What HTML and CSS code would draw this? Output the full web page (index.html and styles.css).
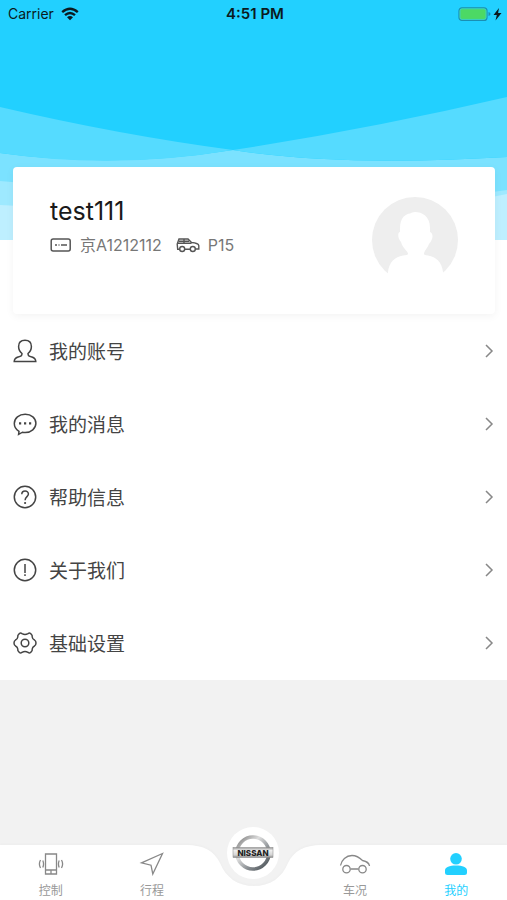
FILE: index.html
```html
<!DOCTYPE html>
<html lang="zh-CN">
<head>
    <meta charset="UTF-8">
    <meta name="viewport" content="width=device-width, initial-scale=1">
    <title>我的</title>
    <link rel="stylesheet" href="styles.css">
</head>
<body>
<header class="top">
    <svg class="waves" viewBox="0 0 507 240" preserveAspectRatio="none" aria-hidden="true">
        <rect width="507" height="240" fill="#22d0ff"/>
        <path d="M0 153Q115 169 233 150Q340 167 507 157V240H0z" fill="#7be2ff"/>
        <path d="M0 107Q120 135 233 150Q115 170 0 153z" fill="#55dbff"/>
        <path d="M507 97Q370 129 233 150Q340 167 507 157z" fill="#55dbff"/>
        <path d="M0 181Q120 190 253 220Q400 205 507 190V240H0z" fill="#9ee9ff"/>
        <path d="M0 205Q120 210 253 235Q440 208 507 194V240H0z" fill="#beefff"/>
    </svg>
    <div class="status">
        <div class="carrier">
            <span>Carrier</span>
            <svg width="18" height="14" viewBox="0 0 18 14" fill="none" stroke="#0b1a20" stroke-width="2.4">
                <path d="M1.2 5.2Q9-1.6 16.8 5.2M4 8.2Q9 3.8 14 8.2"/>
                <path d="M6 10.3Q9 7.8 12 10.3L9 13.2z" fill="#0b1a20" stroke="none"/>
            </svg>
        </div>
        <div class="time">4:51 PM</div>
        <div class="battery">
            <svg width="44" height="14" viewBox="0 0 44 14">
                <rect x="1" y=".8" width="28" height="12.6" rx="3" fill="#4cd964" stroke="#1a8fb4" stroke-width="1.2"/>
                <rect x="2" y="1.8" width="26" height="10.6" rx="2" fill="none" stroke="#36d3d8" stroke-width=".8"/>
                <path d="M30.5 5q2 .5 2 2t-2 2z" fill="#1a8fb4"/>
                <path d="M41 1L35.500 8h3.300l-1.300 5.500L43.500 6h-3.400z" fill="#0b1a20"/>
            </svg>
        </div>
    </div>
    <section class="card">
        <div class="user">
            <h1 class="name">test111</h1>
            <div class="info">
                <svg width="22" height="16" viewBox="0 0 22 16" fill="none" stroke="#555" stroke-width="1.5">
                    <rect x="1.2" y="2" width="19" height="12" rx="2"/>
                    <path d="M5 8h2M8.5 8h1M11 8h6"/>
                </svg>
                <span class="plate">京A1212112</span>
                <svg width="24" height="16" viewBox="0 0 24 16" fill="none" stroke="#555" stroke-width="1.4">
                    <path d="M3.800 12.300H1.700L1.200 7 3 2H12L15.500 5.500Q22.500 6 22.800 8.700V12H19.200M8.700 12.300H14.300"/>
                    <path d="M1.500 6.300H15.500M8 2V6.300M3 4.200H13"/>
                    <circle cx="6.200" cy="12" r="2.500"/>
                    <circle cx="16.800" cy="12" r="2.500"/>
                </svg>
                <span>P15</span>
            </div>
        </div>
        <svg class="avatar" width="86" height="86" viewBox="0 0 86 86" role="img" aria-label="头像">
            <circle cx="43" cy="43" r="43" fill="#eee"/>
            <path d="M43 15C50 15 58 19 58 31V35C61 36 62 41 57 47C55 52 52 54 52 57Q52 58 56 58.500C64 60 70 65 71 75V86H16V75C17 65 23 60 31 58.500Q36 58 36 57C36 54 31 52 29 45C25 40 26 35 28 35V31C28 20 34 17 38 16.500Q40 15 43 15z" fill="#fff"/>
        </svg>
    </section>
</header>

<nav class="menu">
    <a href="#account">
        <svg width="24" height="24" viewBox="0 0 24 24">
            <path d="M9 14.500C6.500 12.500 5.600 10 5.600 7.500C5.600 3.500 8 1.200 12 1.200S18.400 3.500 18.400 7.500C18.400 10 17.500 12.500 15 14.500C15 17 16 17.200 19 18C22 19 22.700 20 22.800 22.500H1.200C1.300 20 2 19 5 18C8 17.200 9 17 9 14.500z"/>
        </svg>
        <span>我的账号</span>
        <svg class="arrow" width="10" height="14" viewBox="0 0 10 14"><path d="M2 1L8 7 2 13"/></svg>
    </a>
    <a href="#message">
        <svg width="24" height="24" viewBox="0 0 24 24">
            <path d="M6 19.400C3 17.500 1.300 14.700 1.300 11.500C1.300 6.200 6 2.200 12.200 2.200S22.900 6.200 22.900 11.300S18.200 20.500 12.200 20.500Q10.500 20.500 9.500 20.200L5.600 22.300z"/>
            <path class="dot" d="M6 10.300h2.200v2.200H6zM11 10.300h2.200v2.200H11zM16 10.300h2.200v2.200H16z"/>
        </svg>
        <span>我的消息</span>
        <svg class="arrow" width="10" height="14" viewBox="0 0 10 14"><path d="M2 1L8 7 2 13"/></svg>
    </a>
    <a href="#help">
        <svg width="24" height="24" viewBox="0 0 24 24">
            <circle cx="12" cy="12" r="10.700"/>
            <path d="M8.800 9.300C8.800 4.900 15.400 4.900 15.400 9.100C15.400 11.600 12.100 11.800 12.100 15.200"/>
            <circle class="dot" cx="12.100" cy="18" r="1.100"/>
        </svg>
        <span>帮助信息</span>
        <svg class="arrow" width="10" height="14" viewBox="0 0 10 14"><path d="M2 1L8 7 2 13"/></svg>
    </a>
    <a href="#about">
        <svg width="24" height="24" viewBox="0 0 24 24">
            <circle cx="12" cy="12" r="10.700"/>
            <path d="M12 6V15M12 16.300V18"/>
        </svg>
        <span>关于我们</span>
        <svg class="arrow" width="10" height="14" viewBox="0 0 10 14"><path d="M2 1L8 7 2 13"/></svg>
    </a>
    <a href="#setting">
        <svg width="24" height="24" viewBox="0 0 24 24">
            <path d="M6.500 2.500Q7.500 1.600 9 2.700Q12 4.500 15 2.700Q16.500 1.600 17.500 2.500L18.500 3.500Q19.500 4.500 19.200 6Q19.500 8.200 21.500 9Q23 10 23 12T21.500 15Q19.500 15.800 19.200 18Q19.500 19.500 18.500 20.500L17.500 21.500Q16.500 22.400 15 21.300Q12 19.500 9 21.300Q7.500 22.400 6.500 21.500L5.500 20.500Q4.500 19.500 4.800 18Q4.500 15.800 2.500 15Q1 14 1 12T2.500 9Q4.500 8.200 4.800 6Q4.500 4.500 5.500 3.500z"/>
            <circle cx="12" cy="12" r="3.800"/>
        </svg>
        <span>基础设置</span>
        <svg class="arrow" width="10" height="14" viewBox="0 0 10 14"><path d="M2 1L8 7 2 13"/></svg>
    </a>
</nav>

<nav class="tab">
    <div class="tab-bg">
        <i></i>
        <svg width="136" height="55" viewBox="0 0 136 55">
            <path d="M0 0C18 0 28 6 34 18C40 33 52 41 68 41S96 33 102 18C108 6 118 0 136 0V55H0z" fill="#fff"/>
        </svg>
        <i></i>
    </div>
    <a href="#control">
        <svg width="26" height="24" viewBox="0 0 26 24">
            <path d="M7.500 2H18.500V22H7.500zM7.500 18H18.500M13 18V22M4.800 8.500Q6.300 12 4.800 15.500M2.500 8Q.300 12 2.500 16M21.200 8.500Q19.700 12 21.200 15.500M23.500 8Q25.700 12 23.500 16"/>
        </svg>
        <span>控制</span>
    </a>
    <a href="#trip">
        <svg width="26" height="24" viewBox="0 0 26 24">
            <path d="M23.500 1.500L2.500 10.800 12 13.200 13.800 22z"/>
        </svg>
        <span>行程</span>
    </a>
    <a class="home" href="#home">
        <svg width="52" height="52" viewBox="0 0 52 52" role="img" aria-label="NISSAN">
            <defs>
                <linearGradient id="metal" x1="0" y1="0" x2="1" y2="1">
                    <stop offset="0" stop-color="#777"/>
                    <stop offset=".35" stop-color="#dedede"/>
                    <stop offset=".65" stop-color="#8b9094"/>
                    <stop offset="1" stop-color="#444b50"/>
                </linearGradient>
                <linearGradient id="plate" x1="0" y1="0" x2="0" y2="1">
                    <stop offset="0" stop-color="#999"/>
                    <stop offset=".3" stop-color="#eee"/>
                    <stop offset=".75" stop-color="#d4d4d4"/>
                    <stop offset="1" stop-color="#888"/>
                </linearGradient>
            </defs>
            <circle cx="26" cy="26" r="26" fill="#fff"/>
            <circle cx="26" cy="26" r="16" fill="none" stroke="url(#metal)" stroke-width="3.600"/>
            <rect x="6" y="20.500" width="40" height="10" fill="url(#plate)" stroke="#888" stroke-width=".5"/>
            <text class="logo-text" x="26" y="28.500" text-anchor="middle">NISSAN</text>
        </svg>
    </a>
    <a href="#car">
        <svg width="32" height="24" viewBox="0 0 32 24">
            <path d="M1.500 13.500C2.500 8 7 3.500 13 3.500C18 3.500 20.500 5.500 23.500 8.500C28 9.500 30 10.500 30.500 14M11.500 17H19.500"/>
            <circle cx="7.500" cy="17.200" r="3.700"/>
            <circle cx="23.500" cy="17.200" r="3.700"/>
        </svg>
        <span>车况</span>
    </a>
    <a class="active" href="#mine">
        <svg width="26" height="24" viewBox="0 0 26 24">
            <circle cx="13" cy="6.800" r="5.800"/>
            <path d="M2 22V18.500C2 15 6.500 13.500 13 13.500S24 15 24 18.500V20.500Q24 23 21.500 23H4.500Q2 23 2 21z"/>
        </svg>
        <span>我的</span>
    </a>
</nav>
</body>
</html>
```

FILE: styles.css
```css
*{padding: 0;margin: 0;box-sizing: border-box;}
body{min-height: 100vh;display: flex;flex-direction: column;background: #f2f2f2;font: 16px "Inter","Noto Sans CJK SC",sans-serif;color: #444;}
a{color: inherit;text-decoration: none;}
svg{display: block;flex: none;}

.top{position: relative;background: #fff;}
.waves{position: absolute;left: 0;top: 0;width: 100%;height: 240px;}

/* 状态栏 */
.status{position: relative;height: 27px;padding: 0 5px 0 8px;display: grid;grid-template-columns: 1fr auto 1fr;align-items: center;font-size: 14px;color: #0b1a20;}
.carrier{display: flex;align-items: center;gap: 7px;}
.time{font-size: 15px;font-weight: 600;}
.battery{justify-self: end;}

/* 用户卡片 */
.card{position: relative;margin: 140px 12px 0 13px;height: 147px;padding: 30px 37px;display: flex;justify-content: space-between;background: #fff;border-radius: 4px;box-shadow: 0 2px 8px rgba(0,0,0,.05);}
.name{font-size: 25px;line-height: 28px;font-weight: 400;color: #1a1a1a;}
.info{display: flex;align-items: center;gap: 8px;margin-top: 8px;line-height: 24px;font-size: 16px;color: #777;}
.plate{margin-right: 6px;}

/* 菜单 */
.menu{background: #fff;padding-bottom: 1px;font-family: "Noto Sans CJK SC",sans-serif;}
.menu a{height: 73px;padding: 0 13px;display: flex;align-items: center;gap: 12px;font-size: 19px;line-height: 24px;}
.menu svg{fill: none;stroke: #444;stroke-width: 1.5;}
.menu .dot{fill: #444;stroke: none;}
.menu .arrow{margin-left: auto;stroke: #888;}

/* 底部导航 */
.tab{position: relative;margin-top: auto;height: 55px;display: grid;grid-template-columns: repeat(5,1fr);color: #999;font-size: 12px;}
.tab-bg{position: absolute;left: 0;top: 0;width: 100%;height: 100%;display: flex;filter: drop-shadow(0 -1px 1px rgba(0,0,0,.02));}
.tab-bg i{flex: 1;background: #fff;}
.tab a{position: relative;padding-top: 7px;display: flex;flex-direction: column;align-items: center;gap: 7px;line-height: 16px;}
.tab a svg{fill: none;stroke: #888;stroke-width: 1.3;}
.tab .active{color: #22d0ff;}
.tab .active svg{fill: #22d0ff;stroke: none;}
.tab .home{padding: 0;margin-top: -18px;}
.tab .home svg{stroke: none;}
.logo-text{font: 800 8px "Inter",sans-serif;fill: #222;}
```
